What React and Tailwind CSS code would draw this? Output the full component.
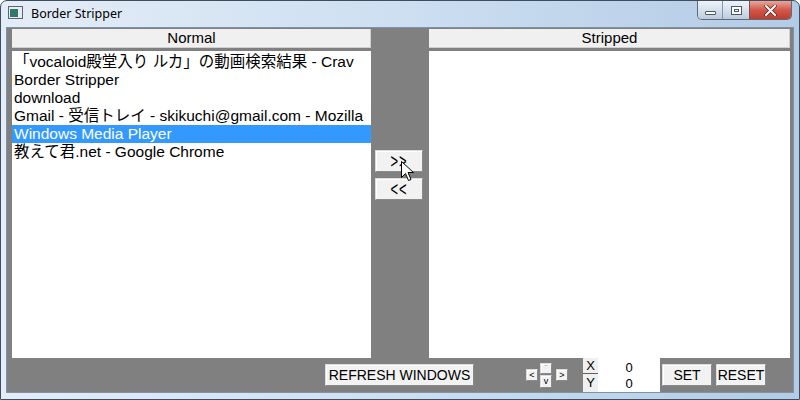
import React from "react";

const items = [
  "「vocaloid殿堂入り ルカ」の動画検索結果 - Crav",
  "Border Stripper",
  "download",
  "Gmail - 受信トレイ - skikuchi@gmail.com - Mozilla",
  "Windows Media Player",
  "教えて君.net - Google Chrome",
];

const font = "font-['Liberation_Sans','Noto_Sans_CJK_JP',sans-serif]";

function Btn({ className, children }) {
  return (
    <div
      className={`flex items-center justify-center bg-[#f2f2f2] border border-t-[#dcdcdc] border-l-[#dcdcdc] border-r-[#8a8a8a] border-b-[#8a8a8a] shadow-[inset_1px_1px_0_#ffffff] text-black leading-none ${className}`}
    >
      {children}
    </div>
  );
}

function Panel({ title, width, list }) {
  return (
    <div className={`flex flex-col ${width}`}>
      <div className="h-[19px] bg-[#f0f0f0] flex items-center justify-center text-[15px] text-black shadow-[inset_-1px_-1px_0_#d0d0d0]">
        {title}
      </div>
      <div className="mt-[3px] flex-1 bg-white overflow-hidden pt-[2px]">
        {list &&
          list.map((t, i) => (
            <div
              key={i}
              className={`h-[18px] leading-[18px] text-[15.5px] whitespace-nowrap pl-[2px] overflow-hidden ${
                i === 4 ? "bg-[#3399ff] text-white" : "text-black"
              }`}
            >
              {t}
            </div>
          ))}
      </div>
    </div>
  );
}

export default function App() {
  return (
    <div
      className={`relative w-[800px] h-[400px] flex flex-col overflow-hidden rounded-t-[7px] border border-[#3f4e5e] bg-gradient-to-r from-[#e4edf7] via-[#cddff1] to-[#b3cbe5] ${font}`}
    >
      {/* title bar */}
      <div className="h-[27px] flex items-start">
        <div className="mt-[5px] ml-[7px] w-[15px] h-[13px] border border-[#5a6670] bg-[#e8ecef] flex items-end p-[1px]">
          <div className="w-[8px] h-[8px] bg-[#2f7a6a]" />
        </div>
        <div className="ml-[8px] mt-[5px] text-[12.5px] text-black font-['Noto_Sans',sans-serif] leading-[16px]">
          Border Stripper
        </div>
        <div className="flex-1" />
        <div className="mr-[7px] flex h-[19px] rounded-b-[5px] border border-t-0 border-[#5d6b7a] overflow-hidden">
          <div className="w-[25px] bg-gradient-to-b from-[#eef3f9] via-[#d6e1ee] to-[#bccbdc] flex items-center justify-center border-r border-[#8696a8]">
            <div className="w-[11px] h-[4px] mt-[5px] bg-white border border-[#4a5868] rounded-[1px]" />
          </div>
          <div className="w-[27px] bg-gradient-to-b from-[#eef3f9] via-[#d6e1ee] to-[#bccbdc] flex items-center justify-center border-r border-[#7a5050]">
            <div className="w-[11px] h-[9px] border border-[#4a5868] bg-white flex items-center justify-center">
              <div className="w-[5px] h-[3px] border border-[#4a5868]" />
            </div>
          </div>
          <div className="w-[41px] bg-gradient-to-b from-[#e9a69a] via-[#d0574a] to-[#c23b2b] flex items-center justify-center">
            <svg width="13" height="11" viewBox="0 0 13 11">
              <path d="M2 1 L11 10 M11 1 L2 10" stroke="#5b1d16" strokeWidth="3.4" strokeLinecap="round" />
              <path d="M2 1 L11 10 M11 1 L2 10" stroke="#ffffff" strokeWidth="2" strokeLinecap="round" />
            </svg>
          </div>
        </div>
      </div>

      {/* client area */}
      <div className="flex-1 mx-[6px] mb-[7px] bg-[#808080] flex flex-col shadow-[0_0_0_1px_#7f93a8]">
        <div className="h-[330px] pt-[1px] pl-[5px] flex">
          <Panel title="Normal" width="w-[359px]" list={items} />
          <div className="w-[58px] flex flex-col pl-[4px] pt-[121px] gap-[6px]">
            <Btn className="w-[48px] h-[22px] text-[13px] tracking-[1px]">
              <span className="inline-block scale-y-150">&gt;&gt;</span>
            </Btn>
            <Btn className="w-[48px] h-[22px] text-[13px] tracking-[1px]">
              <span className="inline-block scale-y-150">&lt;&lt;</span>
            </Btn>
          </div>
          <Panel title="Stripped" width="w-[361px]" />
        </div>

        {/* bottom bar */}
        <div className="flex-1 flex items-start">
          <Btn className="ml-[318px] mt-[6px] w-[149px] h-[22px] text-[14px]">REFRESH WINDOWS</Btn>
          <div className="ml-[50px] mt-[3px] w-[46px] h-[28px] flex items-center gap-[2px]">
            <Btn className="w-[12px] h-[12px] text-[9px] ml-[2px]">&lt;</Btn>
            <div className="flex flex-col gap-[1px]">
              <Btn className="w-[12px] h-[11px] text-[8px]">¨</Btn>
              <Btn className="w-[12px] h-[13px] text-[9px]">v</Btn>
            </div>
            <Btn className="w-[12px] h-[12px] text-[9px] ml-[2px]">&gt;</Btn>
          </div>
          <div className="ml-[13px] w-[15px] h-full flex flex-col bg-[#f0f0f0] text-[13px] text-black leading-none">
            <div className="h-[16px] flex items-center justify-center border-b border-[#606060]">X</div>
            <div className="h-[16px] flex items-center justify-center">Y</div>
          </div>
          <div className="w-[62px] h-full bg-white flex flex-col items-center pt-[1px] text-[13px] text-black leading-none">
            <div className="h-[16px] flex items-center">0</div>
            <div className="h-[16px] flex items-center">0</div>
          </div>
          <Btn className="ml-[2px] mt-[6px] w-[50px] h-[22px] text-[14px]">SET</Btn>
          <Btn className="ml-[4px] mt-[6px] w-[50px] h-[22px] text-[14px]">RESET</Btn>
        </div>
      </div>

      {/* mouse cursor */}
      <svg className="absolute left-[400px] top-[160px]" width="13" height="21" viewBox="0 0 13 21">
        <path
          d="M0.5 0.5 L0.5 16.5 L4.5 12.5 L7.5 19.5 L10 18.5 L7 11.5 L12.5 11.5 Z"
          fill="#ffffff"
          stroke="#000000"
          strokeWidth="1"
          strokeLinejoin="round"
        />
      </svg>
    </div>
  );
}
